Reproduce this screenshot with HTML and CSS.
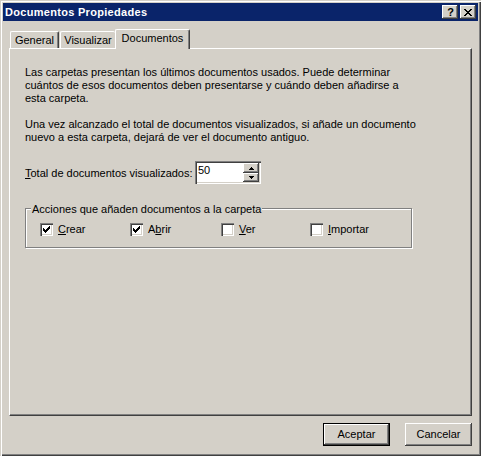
FILE: index.html
```html
<!DOCTYPE html>
<html lang="es">
<head>
<meta charset="utf-8">
<title>Documentos Propiedades</title>
<link rel="stylesheet" href="styles.css">
</head>
<body>
<div class="window">
  <div class="titlebar">
    <span class="title">Documentos Propiedades</span>
    <div class="caption-buttons">
      <span class="cap-btn help">?</span>
      <span class="cap-btn close"><svg width="8" height="7" viewBox="0 0 8 7"><path d="M0 0h2v1h-2zM6 0h2v1h-2zM1 1h2v1h-2zM5 1h2v1h-2zM2 2h4v1h-4zM3 3h2v1h-2zM2 4h4v1h-4zM1 5h2v1h-2zM5 5h2v1h-2zM0 6h2v1h-2zM6 6h2v1h-2z" fill="#000"/></svg></span>
    </div>
  </div>
  <div class="tabs">
    <div class="tab tab-general">General</div>
    <div class="tab tab-visual">Visualizar</div>
    <div class="tab tab-active">Documentos</div>
  </div>
  <div class="panel">
    <p class="intro">Las carpetas presentan los últimos documentos usados. Puede determinar<br>cuántos de esos documentos deben presentarse y cuándo deben añadirse a<br>esta carpeta.</p>
    <p class="note">Una vez alcanzado el total de documentos visualizados, si añade un documento<br>nuevo a esta carpeta, dejará de ver el documento antiguo.</p>
    <div class="total-row">
      <span class="total-label"><u>T</u>otal de documentos visualizados:</span>
      <div class="spin">
        <span class="spin-value">50</span>
        <div class="spin-buttons">
          <span class="spin-btn up"><svg width="5" height="3" viewBox="0 0 5 3"><path d="M2 0h1v1h1v1h1v1h-5v-1h1v-1h1z" fill="#000"/></svg></span>
          <span class="spin-btn down"><svg width="5" height="3" viewBox="0 0 5 3"><path d="M0 0h5v1h-1v1h-1v1h-1v-1h-1v-1h-1z" fill="#000"/></svg></span>
        </div>
      </div>
    </div>
    <div class="group">
      <div class="group-label">Acciones que añaden documentos a la carpeta</div>
      <div class="checks">
        <div class="check"><span class="box"><svg width="7" height="7" viewBox="0 0 7 7"><path d="M6 0h1v1h-1zM5 1h2v1h-2zM0 2h1v1h-1zM4 2h3v1h-3zM0 3h2v1h-2zM3 3h3v1h-3zM0 4h5v1h-5zM1 5h3v1h-3zM2 6h1v1h-1z" fill="#000"/></svg></span><span class="check-text"><u>C</u>rear</span></div>
        <div class="check"><span class="box"><svg width="7" height="7" viewBox="0 0 7 7"><path d="M6 0h1v1h-1zM5 1h2v1h-2zM0 2h1v1h-1zM4 2h3v1h-3zM0 3h2v1h-2zM3 3h3v1h-3zM0 4h5v1h-5zM1 5h3v1h-3zM2 6h1v1h-1z" fill="#000"/></svg></span><span class="check-text">A<u>b</u>rir</span></div>
        <div class="check"><span class="box"></span><span class="check-text"><u>V</u>er</span></div>
        <div class="check"><span class="box"></span><span class="check-text"><u>I</u>mportar</span></div>
      </div>
    </div>
  </div>
  <div class="buttons">
    <button class="btn btn-default">Aceptar</button>
    <button class="btn">Cancelar</button>
  </div>
</div>
</body>
</html>
```
FILE: styles.css
```css
* { box-sizing: border-box; }
html, body { margin: 0; padding: 0; }
body {
  width: 481px;
  height: 456px;
  overflow: hidden;
  background: #d4d0c8;
  color: #000;
  font-family: "Liberation Sans", Arial, sans-serif;
  font-size: 11px;
  line-height: 13px;
}
.window {
  width: 481px;
  height: 456px;
  padding: 3px;
  display: flex;
  flex-direction: column;
  box-shadow: inset 1px 1px #d4d0c8, inset 2px 2px #fff, inset -1px -1px #404040, inset -2px -2px #808080;
}
.titlebar {
  height: 18px;
  flex: none;
  background: #0a246a;
  color: #fff;
  font-weight: bold;
  display: flex;
  align-items: center;
  justify-content: space-between;
  padding: 0 2px;
}
.title { letter-spacing: 0.3px; }
.caption-buttons { display: flex; gap: 2px; }
.cap-btn {
  width: 16px;
  height: 14px;
  background: #d4d0c8;
  color: #000;
  display: flex;
  align-items: center;
  justify-content: center;
  box-shadow: inset -1px -1px #404040, inset 1px 1px #fff, inset -2px -2px #808080, inset 2px 2px #d4d0c8;
}
.help { font-size: 11px; line-height: 11px; padding-left: 1px; }
.tabs {
  flex: none;
  height: 19px;
  margin: 8px 0 0 7px;
  display: flex;
  align-items: flex-end;
}
.tab {
  height: 17px;
  padding-top: 2px;
  text-align: center;
  border-top: 1px solid #fff;
  border-left: 1px solid #fff;
  border-right: 1px solid #404040;
  border-radius: 2px 2px 0 0;
  box-shadow: inset -1px 0 #808080;
}
.tab-general { width: 49px; }
.tab-visual { width: 55px; margin-left: 1px; border-right: none; box-shadow: none; }
.tab-active {
  width: 75px;
  height: 20px;
  margin-bottom: -1px;
  position: relative;
  z-index: 1;
  background: #d4d0c8;
}
.panel {
  flex: 1;
  margin: 0 6px;
  padding: 17px 15px 0 15px;
  border-top: 1px solid #fff;
  border-left: 1px solid #fff;
  border-right: 1px solid #404040;
  border-bottom: 1px solid #404040;
  box-shadow: inset -1px -1px #808080;
}
.intro { margin: 0 0 13px; }
.note { margin: 0 0 17px; }
.total-row {
  display: grid;
  grid-template-columns: 170px 66px;
  align-items: center;
  height: 23px;
}
.total-label { padding-top: 1px; }
.spin {
  width: 66px;
  height: 23px;
  background: #fff;
  padding: 2px;
  display: flex;
  box-shadow: inset 1px 1px #808080, inset 2px 2px #404040, inset -1px -1px #fff, inset -2px -2px #d4d0c8;
}
.spin-value { flex: 1; padding: 1px 0 0 1px; }
.spin-buttons { width: 16px; display: flex; flex-direction: column; }
.spin-btn {
  background: #d4d0c8;
  display: flex;
  align-items: center;
  justify-content: center;
  box-shadow: inset -1px -1px #404040, inset 1px 1px #fff, inset -2px -2px #808080, inset 2px 2px #d4d0c8;
}
.spin-btn.up { height: 10px; }
.spin-btn.down { height: 9px; }
.group {
  margin-top: 24px;
  width: 387px;
  height: 40px;
  border: 1px solid #808080;
  box-shadow: inset 1px 1px #fff, 1px 1px #fff;
}
.group-label {
  display: table;
  margin: -6px 0 0 5px;
  padding: 0 1px;
  background: #d4d0c8;
}
.checks {
  display: grid;
  grid-template-columns: 90px 91px 89px auto;
  margin: 7px 0 0 14px;
}
.check { display: flex; align-items: center; gap: 5px; }
.box {
  width: 13px;
  height: 13px;
  flex: none;
  background: #fff;
  display: flex;
  align-items: center;
  justify-content: center;
  box-shadow: inset 1px 1px #808080, inset 2px 2px #404040, inset -1px -1px #fff, inset -2px -2px #d4d0c8;
}
.buttons {
  flex: none;
  height: 23px;
  margin: 7px 6px 7px 0;
  display: flex;
  justify-content: flex-end;
  gap: 15px;
}
.btn {
  width: 67px;
  height: 23px;
  padding: 0;
  border: none;
  background: #d4d0c8;
  color: #000;
  font: inherit;
  box-shadow: inset -1px -1px #404040, inset 1px 1px #fff, inset -2px -2px #808080, inset 2px 2px #d4d0c8;
}
.btn-default {
  box-shadow: inset 0 0 0 1px #000, inset -2px -2px #404040, inset 2px 2px #fff, inset -3px -3px #808080;
}
```
